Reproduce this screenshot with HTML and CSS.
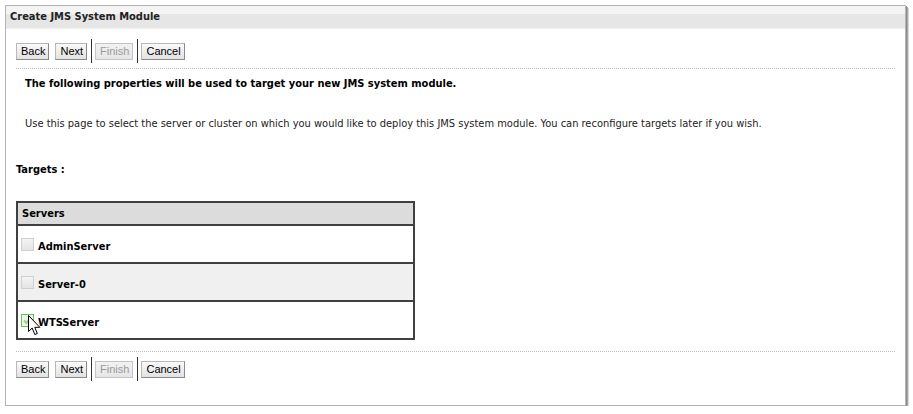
FILE: index.html
```html
<!DOCTYPE html>
<html>
<head>
<meta charset="utf-8">
<link rel="stylesheet" href="styles.css">
</head>
<body>
<div class="window">
  <div class="titlebar">Create JMS System Module</div>
  <div class="content">
    <div class="toolbar">
      <button class="btn">Back</button>
      <button class="btn">Next</button>
      <span class="sep"></span>
      <button class="btn disabled">Finish</button>
      <span class="sep"></span>
      <button class="btn">Cancel</button>
    </div>
    <div class="dots"></div>
    <div class="heading">The following properties will be used to target your new JMS system module.</div>
    <div class="desc">Use this page to select the server or cluster on which you would like to deploy this JMS system module. You can reconfigure targets later if you wish.</div>
    <div class="targets">Targets :</div>
    <div class="table">
      <div class="thead">Servers</div>
      <div class="row"><span class="cb"></span><span class="name">AdminServer</span></div>
      <div class="row alt"><span class="cb"></span><span class="name">Server-0</span></div>
      <div class="row last">
        <span class="cb checked"><svg width="11" height="11" viewBox="0 0 11 11"><path d="M2 5.5 L4.5 8 L9 2.5" fill="none" stroke="#9ccf8a" stroke-width="2"/></svg></span>
        <span class="name">WTSServer</span>
        <svg class="cursor" width="13" height="21" viewBox="0 0 13 21"><path d="M0.5 0.5 L0.5 16.5 L4.2 13 L6.8 19.5 L9.3 18.5 L6.8 12.3 L11.8 12.3 Z" fill="#fff" stroke="#000" stroke-width="1"/></svg>
      </div>
    </div>
    <div class="dots bottom"></div>
    <div class="toolbar">
      <button class="btn">Back</button>
      <button class="btn">Next</button>
      <span class="sep"></span>
      <button class="btn disabled">Finish</button>
      <span class="sep"></span>
      <button class="btn">Cancel</button>
    </div>
  </div>
</div>
</body>
</html>
```

FILE: styles.css
```css
html, body { margin: 0; padding: 0; background: #fff; }
body { font-family: "DejaVu Sans Condensed", "DejaVu Sans", Tahoma, sans-serif; font-stretch: semi-condensed; font-size: 11px; color: #000; }
.window {
  margin: 5px 0 0 5px;
  width: 901px;
  height: 401px;
  border: 1px solid #b4b4b4;
  box-shadow: 1px 1px 0 #8c8c8c, 2px 2px 0 #a8a8a8, 3px 3px 0 #d8d8d8;
  box-sizing: border-box;
  background: #fff;
}
.titlebar {
  height: 23px;
  line-height: 22px;
  padding-left: 4px;
  font-weight: bold;
  font-size: 11px;
  color: #222;
  background: linear-gradient(#f4f4f4 0, #f4f4f4 8px, #e6e6e6 8px, #e6e6e6 100%);
  border-bottom: 1px solid #f0f0f0;
  box-sizing: border-box;
}
.content { padding: 0 0 0 10px; }
.toolbar { display: flex; align-items: center; height: 24px; margin-top: 10px; }
.btn {
  font-family: "Liberation Sans", Arial, sans-serif;
  font-stretch: normal;
  font-size: 11px;
  height: 17px;
  padding: 0 3px 0 4px;
  margin-right: 6px;
  border: 1px solid #8a8a8a;
  border-top-color: #b8b8b8;
  border-left-color: #b8b8b8;
  background: linear-gradient(#fafafa, #e2e2e2);
  color: #000;
  border-radius: 0;
  line-height: 15px;
}
.btn.disabled { color: #9a9a9a; border-color: #c4c4c4; background: linear-gradient(#f2f2f2, #e6e6e6); }
.sep { width: 1px; height: 24px; background: #333; margin: 0 3px 0 -2px; }
.dots { border-top: 1px dotted #bdbdbd; width: 879px; margin-top: 5px; }
.heading { font-weight: bold; padding-left: 9px; margin-top: 8px; line-height: 14px; }
.desc { padding-left: 9px; margin-top: 26px; color: #222; line-height: 14px; }
.targets { font-weight: bold; margin-top: 32px; line-height: 14px; }
.table {
  margin-top: 24px;
  width: 399px;
  border: 2px solid #404040;
  box-sizing: border-box;
}
.thead {
  height: 23px;
  line-height: 22px;
  padding-left: 4px;
  background: #dcdcdc;
  font-weight: bold;
  border-bottom: 2px solid #404040;
  box-sizing: border-box;
}
.row {
  position: relative;
  height: 38px;
  display: flex;
  align-items: center;
  padding-left: 3px;
  border-bottom: 2px solid #404040;
  box-sizing: border-box;
  padding-top: 4px;
}
.row.alt { background: #f0f0f0; }
.row.last { border-bottom: none; height: 36px; }
.cb {
  width: 11px; height: 11px;
  border: 1px solid #d0d0d0;
  background: linear-gradient(#f4f4f4, #e4e4e4);
  margin-right: 4px;
  display: inline-block;
  position: relative;
  top: -2px;
}
.cb.checked { border-color: #6cbf5a; background: #eaf5e6; }
.cb svg { display: block; }
.name { font-weight: bold; }
.cursor { position: absolute; left: 10px; top: 13px; }
.bottom { margin-top: 11px; }
.bottom + .toolbar { margin-top: 5px; }
```
